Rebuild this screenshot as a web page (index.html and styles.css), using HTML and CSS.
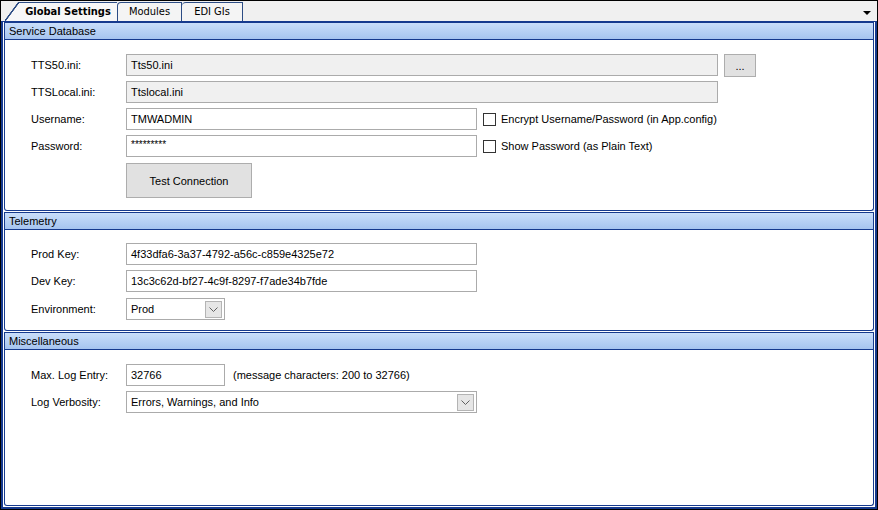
FILE: index.html
```html
<!DOCTYPE html>
<html>
<head>
<meta charset="utf-8">
<title>Global Settings</title>
<link rel="stylesheet" href="styles.css">
</head>
<body>
<div class="window">
  <div class="tabstrip">
    <div class="tabs">
      <div class="tab tab-active">Global Settings</div>
      <div class="tab tab-modules">Modules</div>
      <div class="tab tab-edi">EDI GIs</div>
    </div>
    <div class="strip-arrow"></div>
  </div>
  <div class="panel">
    <section class="group group-db">
      <div class="group-head">Service Database</div>
      <div class="group-body">
        <div class="row">
          <span class="lbl">TTS50.ini:</span>
          <div class="field ro w-long">Tts50.ini</div>
          <button class="btn btn-browse">...</button>
        </div>
        <div class="row">
          <span class="lbl">TTSLocal.ini:</span>
          <div class="field ro w-long">Ttslocal.ini</div>
        </div>
        <div class="row">
          <span class="lbl">Username:</span>
          <div class="field w-mid">TMWADMIN</div>
          <span class="check"></span>
          <span class="check-lbl">Encrypt Username/Password (in App.config)</span>
        </div>
        <div class="row">
          <span class="lbl">Password:</span>
          <div class="field w-mid pw">*********</div>
          <span class="check"></span>
          <span class="check-lbl">Show Password (as Plain Text)</span>
        </div>
        <div class="row row-btn">
          <span class="lbl"></span>
          <button class="btn btn-test">Test Connection</button>
        </div>
      </div>
    </section>
    <section class="group group-tel">
      <div class="group-head">Telemetry</div>
      <div class="group-body">
        <div class="row">
          <span class="lbl">Prod Key:</span>
          <div class="field w-mid">4f33dfa6-3a37-4792-a56c-c859e4325e72</div>
        </div>
        <div class="row">
          <span class="lbl">Dev Key:</span>
          <div class="field w-mid">13c3c62d-bf27-4c9f-8297-f7ade34b7fde</div>
        </div>
        <div class="row row-sel">
          <span class="lbl">Environment:</span>
          <div class="field combo w-short"><span class="combo-text">Prod</span><span class="combo-btn"><svg width="9" height="5" viewBox="0 0 9 5"><polyline points="0.5,0.5 4.5,4.5 8.5,0.5" fill="none" stroke="#606060" stroke-width="1"/></svg></span></div>
        </div>
      </div>
    </section>
    <section class="group group-misc">
      <div class="group-head">Miscellaneous</div>
      <div class="group-body">
        <div class="row">
          <span class="lbl">Max. Log Entry:</span>
          <div class="field w-short">32766</div>
          <span class="hint">(message characters: 200 to 32766)</span>
        </div>
        <div class="row">
          <span class="lbl">Log Verbosity:</span>
          <div class="field combo w-mid"><span class="combo-text">Errors, Warnings, and Info</span><span class="combo-btn"><svg width="9" height="5" viewBox="0 0 9 5"><polyline points="0.5,0.5 4.5,4.5 8.5,0.5" fill="none" stroke="#606060" stroke-width="1"/></svg></span></div>
        </div>
      </div>
    </section>
  </div>
</div>
</body>
</html>
```

FILE: styles.css
```css
* { box-sizing: border-box; }

html, body {
  margin: 0;
  padding: 0;
  background: #ffffff;
}

body {
  font-family: "Liberation Sans", Arial, sans-serif;
  font-size: 11px;
  color: #000;
}

.window {
  width: 878px;
  height: 510px;
  border: 1px solid #000;
  background: #f0f0f0;
  display: flex;
  flex-direction: column;
}

/* ---------- tab strip ---------- */
.tabstrip {
  height: 20px;
  display: flex;
  align-items: flex-end;
  justify-content: space-between;
  background: #f0f0f0;
}

.tabs {
  display: flex;
  align-items: flex-end;
  padding-left: 18px;
  height: 20px;
}

.tab {
  height: 19px;
  line-height: 17px;
  text-align: center;
  font-family: "DejaVu Sans Condensed", "Liberation Sans", sans-serif;
  font-size: 11px;
  color: #000;
  background: #f4f4f4;
  border-top: 1px solid #2c4c84;
}

.tab-active {
  position: relative;
  width: 98px;
  font-weight: bold;
  background: #f7f7f7;
}

.tab-active::before {
  content: "";
  position: absolute;
  left: -14px;
  top: -1px;
  width: 14px;
  height: 19px;
  background: linear-gradient(to bottom right,
    rgba(0,0,0,0) calc(50% - 1px),
    #2c4c84 calc(50% - 0.5px),
    #2c4c84 calc(50% + 0.5px),
    #f7f7f7 calc(50% + 1px));
}

.tab-modules {
  width: 65px;
  border-left: 1px solid #2c4c84;
  border-right: 1px solid #2c4c84;
  border-top-left-radius: 4px;
}

.tab-edi {
  width: 61px;
  border-right: 1px solid #2c4c84;
  border-top-left-radius: 4px;
}

.strip-arrow {
  width: 0;
  height: 0;
  margin: 0 6px 6px 0;
  border-left: 4px solid transparent;
  border-right: 4px solid transparent;
  border-top: 4px solid #000;
}

/* ---------- panel ---------- */
.panel {
  flex: 1;
  background: #fff;
  border-top: 1px solid #163a8e;
  border-left: 2px solid #163a8e;
  border-right: 2px solid #163a8e;
  border-bottom: 2px solid #163a8e;
  padding: 0 1px 1px 1px;
  display: flex;
  flex-direction: column;
}

.group {
  border-left: 1px solid #163a8e;
  border-right: 1px solid #163a8e;
  border-bottom: 1px solid #163a8e;
  border-radius: 0 0 3px 3px;
  margin-bottom: 1px;
}

.group-misc {
  flex: 1;
  margin-bottom: 0;
}

.group-head {
  height: 18px;
  line-height: 16px;
  padding-left: 4px;
  border-top: 1px solid #163a8e;
  border-bottom: 1px solid #163a8e;
  background: linear-gradient(to bottom, #c9defa, #a6c4ef);
  color: #000;
}

.group-body {
  padding-left: 26px;
  display: flex;
  flex-direction: column;
  gap: 5px;
}

.group-db .group-body { height: 170px; padding-top: 14px; }
.group-tel .group-body { height: 100px; padding-top: 13px; }
.group-misc .group-body { padding-top: 14px; }

.row {
  display: flex;
  align-items: center;
  height: 22px;
}

.row-btn {
  height: 35px;
  margin-top: 1px;
}

.row-sel { margin-top: 1px; }

.lbl {
  width: 95px;
  flex: none;
}

.field {
  height: 22px;
  line-height: 20px;
  border: 1px solid #ababab;
  background: #fff;
  padding-left: 4px;
  white-space: nowrap;
  overflow: hidden;
}

.field.ro { background: #f0f0f0; }

.pw { letter-spacing: 0; font-size: 10px; line-height: 18px; }

.w-long { width: 592px; }
.w-mid { width: 351px; }
.w-short { width: 99px; }

.btn {
  font-family: "Liberation Sans", Arial, sans-serif;
  font-size: 11px;
  color: #000;
  background: #e1e1e1;
  border: 1px solid #adadad;
  padding: 0;
  margin: 0;
}

.btn-browse {
  width: 32px;
  height: 23px;
  margin-left: 6px;
  align-self: flex-start;
  line-height: 14px;
}

.btn-test {
  width: 126px;
  height: 35px;
}

.check {
  width: 13px;
  height: 13px;
  border: 1px solid #333;
  background: #fff;
  margin-left: 6px;
  margin-top: 1px;
}

.check-lbl {
  margin-left: 5px;
}

.hint {
  margin-left: 8px;
  margin-top: -1px;
}

.combo {
  display: flex;
  align-items: center;
  justify-content: space-between;
  padding-right: 2px;
}

.combo-btn {
  width: 17px;
  height: 17px;
  border: 1px solid #b4b4b4;
  background: #e6e6e6;
  display: flex;
  align-items: center;
  justify-content: center;
}
```
